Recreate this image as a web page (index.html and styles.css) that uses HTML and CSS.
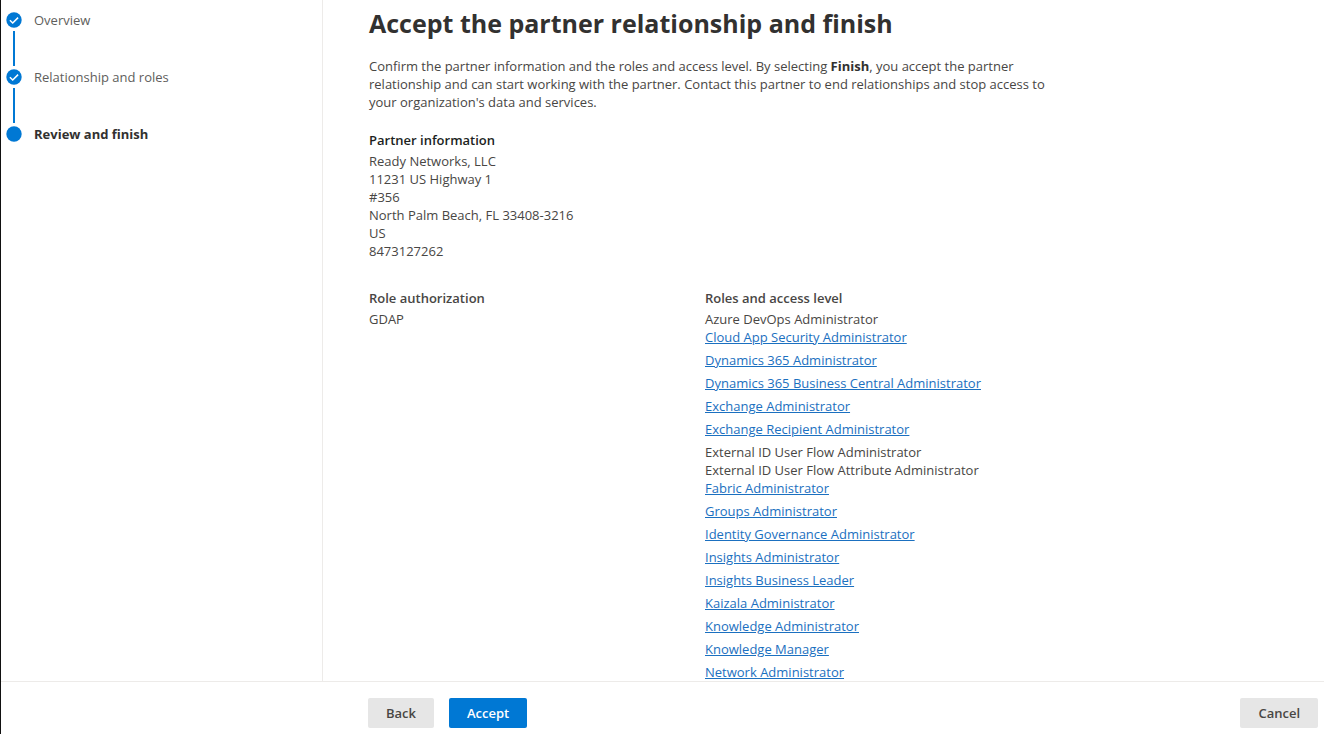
FILE: index.html
```html
<!DOCTYPE html>
<html lang="en">
<head>
<meta charset="utf-8">
<meta name="viewport" content="width=device-width, initial-scale=1">
<title>Accept the partner relationship and finish</title>
<link rel="stylesheet" href="styles.css">
</head>
<body>
<div class="wizard">
  <div class="wizard-body">
    <nav class="steps" aria-label="Progress">
      <ol class="step-list">
        <li class="step">
          <svg class="step-icon" viewBox="0 0 16 16" aria-hidden="true"><circle cx="8" cy="8" r="7.7" fill="#0078d4"/><path d="M3.9 8.3 6.7 11 12.1 5.6" fill="none" stroke="#fff" stroke-width="1.5"/></svg>
          <span>Overview</span>
        </li>
        <li class="step">
          <svg class="step-icon" viewBox="0 0 16 16" aria-hidden="true"><circle cx="8" cy="8" r="7.7" fill="#0078d4"/><path d="M3.9 8.3 6.7 11 12.1 5.6" fill="none" stroke="#fff" stroke-width="1.5"/></svg>
          <span>Relationship and roles</span>
        </li>
        <li class="step step-current" aria-current="step">
          <svg class="step-icon" viewBox="0 0 16 16" aria-hidden="true"><circle cx="8" cy="8" r="7.7" fill="#0078d4"/></svg>
          <span>Review and finish</span>
        </li>
      </ol>
    </nav>
    <main class="content">
      <h1 class="title">Accept the partner relationship and finish</h1>
      <p class="intro">Confirm the partner information and the roles and access level. By selecting <strong>Finish</strong>, you accept the partner relationship and can start working with the partner. Contact this partner to end relationships and stop access to your organization's data and services.</p>
      <section class="partner">
        <h2 class="heading heading-dark">Partner information</h2>
        <address class="address">Ready Networks, LLC<br>11231 US Highway 1<br>#356<br>North Palm Beach, FL 33408-3216<br>US<br>8473127262</address>
      </section>
      <div class="columns">
        <section>
          <h2 class="heading">Role authorization</h2>
          <p class="value">GDAP</p>
        </section>
        <section>
          <h2 class="heading">Roles and access level</h2>
          <ul class="roles">
            <li>Azure DevOps Administrator</li>
            <li><a href="#">Cloud App Security Administrator</a></li>
            <li><a href="#">Dynamics 365 Administrator</a></li>
            <li><a href="#">Dynamics 365 Business Central Administrator</a></li>
            <li><a href="#">Exchange Administrator</a></li>
            <li><a href="#">Exchange Recipient Administrator</a></li>
            <li>External ID User Flow Administrator</li>
            <li>External ID User Flow Attribute Administrator</li>
            <li><a href="#">Fabric Administrator</a></li>
            <li><a href="#">Groups Administrator</a></li>
            <li><a href="#">Identity Governance Administrator</a></li>
            <li><a href="#">Insights Administrator</a></li>
            <li><a href="#">Insights Business Leader</a></li>
            <li><a href="#">Kaizala Administrator</a></li>
            <li><a href="#">Knowledge Administrator</a></li>
            <li><a href="#">Knowledge Manager</a></li>
            <li><a href="#">Network Administrator</a></li>
          </ul>
        </section>
      </div>
    </main>
  </div>
  <footer class="actions">
    <button class="button" type="button">Back</button>
    <button class="button button-primary" type="button">Accept</button>
    <button class="button button-cancel" type="button">Cancel</button>
  </footer>
</div>
</body>
</html>
```
FILE: styles.css
```css
* {
  box-sizing: border-box;
}

body {
  margin: 0;
  background: #fff;
  color: #484644;
  font-family: "Segoe UI", "Open Sans", "Noto Sans", sans-serif;
  font-size: 13px;
  line-height: 18px;
}

.wizard {
  display: flex;
  flex-direction: column;
  height: 100vh;
  border-left: 1px solid #111;
}

.wizard-body {
  display: flex;
  flex: 1;
  min-height: 0;
}

.steps {
  flex: 0 0 322px;
  padding: 11px 5px;
  border-right: 1px solid #edebe9;
}

.step-list,
.roles {
  margin: 0;
  padding: 0;
  list-style: none;
}

.step {
  display: grid;
  grid-template-columns: 16px 1fr;
  column-gap: 12px;
  align-items: center;
  color: #605e5c;
}

.step:not(:last-child)::after {
  content: "";
  justify-self: center;
  width: 2px;
  height: 35px;
  margin: 2px 0;
  background: #0078d4;
}

.step-icon {
  width: 16px;
  height: 16px;
}

.step-current {
  color: #323130;
  font-weight: 700;
}

.content {
  flex: 1;
  min-width: 0;
  padding: 4px 46px 0;
  overflow: hidden;
}

.title {
  margin: 0 0 15px;
  color: #323130;
  font-size: 25px;
  font-weight: 700;
  line-height: 38px;
}

.intro {
  max-width: 684px;
  margin: 0 0 20px;
}

.intro strong {
  color: #323130;
}

.heading {
  margin: 0 0 3px;
  color: #484644;
  font-size: 13px;
  font-weight: 600;
  line-height: 18px;
}

.heading-dark {
  color: #201f1e;
}

.address {
  font-style: normal;
}

.columns {
  display: grid;
  grid-template-columns: 336px 1fr;
  margin-top: 29px;
}

.value {
  margin: 0;
}

.roles a {
  display: block;
  width: fit-content;
  margin-bottom: 5px;
  color: #1b70c0;
  text-decoration: underline;
}

.actions {
  display: flex;
  gap: 15px;
  padding: 16px 6px 6px 367px;
  border-top: 1px solid #edebe9;
}

.button {
  height: 30px;
  padding: 0 18px;
  border: 0;
  border-radius: 2px;
  background: #e6e6e6;
  color: #484644;
  font: inherit;
  font-weight: 600;
}

.button-primary {
  background: #0078d4;
  color: #fff;
}

.button-cancel {
  margin-left: auto;
}
```
